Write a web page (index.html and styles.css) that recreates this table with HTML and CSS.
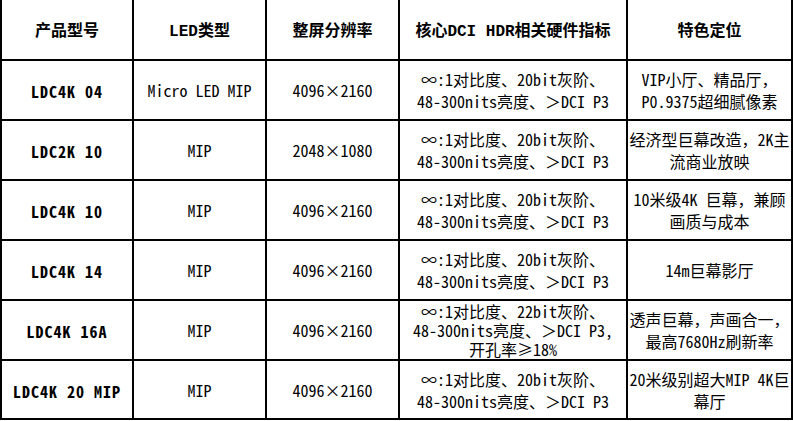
FILE: index.html
```html
<!DOCTYPE html>
<html lang="zh-CN">
<head>
<meta charset="utf-8">
<title>LED产品</title>
<link rel="stylesheet" href="styles.css">
</head>
<body>
<table class="spec">
  <colgroup>
    <col class="c1"><col class="c2"><col class="c3"><col class="c4"><col class="c5">
  </colgroup>
  <thead>
    <tr class="head">
      <th class="first">产品型号</th>
      <th>LED类型</th>
      <th>整屏分辨率</th>
      <th>核心DCI HDR相关硬件指标</th>
      <th>特色定位</th>
    </tr>
  </thead>
  <tbody>
    <tr>
      <td class="first model">LDC4K 04</td>
      <td>Micro LED MIP</td>
      <td>4096×2160</td>
      <td>∞:1对比度、20bit灰阶、<br>48-300nits亮度、＞DCI P3</td>
      <td>VIP小厅、精品厅，<br>P0.9375超细腻像素</td>
    </tr>
    <tr>
      <td class="first model">LDC2K 10</td>
      <td>MIP</td>
      <td>2048×1080</td>
      <td>∞:1对比度、20bit灰阶、<br>48-300nits亮度、＞DCI P3</td>
      <td>经济型巨幕改造，2K主<br>流商业放映</td>
    </tr>
    <tr>
      <td class="first model">LDC4K 10</td>
      <td>MIP</td>
      <td>4096×2160</td>
      <td>∞:1对比度、20bit灰阶、<br>48-300nits亮度、＞DCI P3</td>
      <td>10米级4K 巨幕，兼顾<br>画质与成本</td>
    </tr>
    <tr>
      <td class="first model">LDC4K 14</td>
      <td>MIP</td>
      <td>4096×2160</td>
      <td>∞:1对比度、20bit灰阶、<br>48-300nits亮度、＞DCI P3</td>
      <td>14m巨幕影厅</td>
    </tr>
    <tr>
      <td class="first model">LDC4K 16A</td>
      <td>MIP</td>
      <td>4096×2160</td>
      <td class="tight">∞:1对比度、22bit灰阶、<br>48-300nits亮度、＞DCI P3,<br>开孔率≥18%</td>
      <td>透声巨幕，声画合一，<br>最高7680Hz刷新率</td>
    </tr>
    <tr class="last">
      <td class="first model">LDC4K 20 MIP</td>
      <td>MIP</td>
      <td>4096×2160</td>
      <td>∞:1对比度、20bit灰阶、<br>48-300nits亮度、＞DCI P3</td>
      <td>20米级别超大MIP 4K巨<br>幕厅</td>
    </tr>
  </tbody>
</table>
</body>
</html>
```

FILE: styles.css
```css
html, body {
  margin: 0;
  padding: 0;
  background: #ffffff;
}

.spec {
  border-collapse: separate;
  border-spacing: 0;
  table-layout: fixed;
  width: 793px;
  color: #000000;
  font-family: "Noto Sans Mono CJK SC", "Noto Sans CJK SC", monospace;
  font-size: 16px;
  line-height: 22px;
}

.c1 { width: 134px; }
.c2 { width: 133px; }
.c3 { width: 133px; }
.c4 { width: 228px; }
.c5 { width: 165px; }

.spec th,
.spec td {
  padding: 0;
  text-align: center;
  vertical-align: middle;
  white-space: nowrap;
  border-right: 2px solid #000000;
  border-bottom: 2px solid #000000;
  overflow: hidden;
}

.spec .first {
  border-left: 2px solid #000000;
}

.spec th {
  height: 55px;
  padding-top: 4px;
  font-family: "Liberation Mono", "Noto Sans CJK SC", monospace;
  font-weight: bold;
  font-size: 16px;
}

.spec td {
  height: 58px;
}

.spec .last td {
  height: 57px;
}

.spec td.model {
  height: 56px;
  padding-top: 2px;
  font-family: "Noto Sans Mono CJK SC", "Noto Sans CJK SC", monospace;
  font-weight: bold;
  font-size: 16px;
  letter-spacing: 1px;
}

.spec .last td.model {
  height: 55px;
}

.spec td.tight {
  line-height: 19px;
}
```
